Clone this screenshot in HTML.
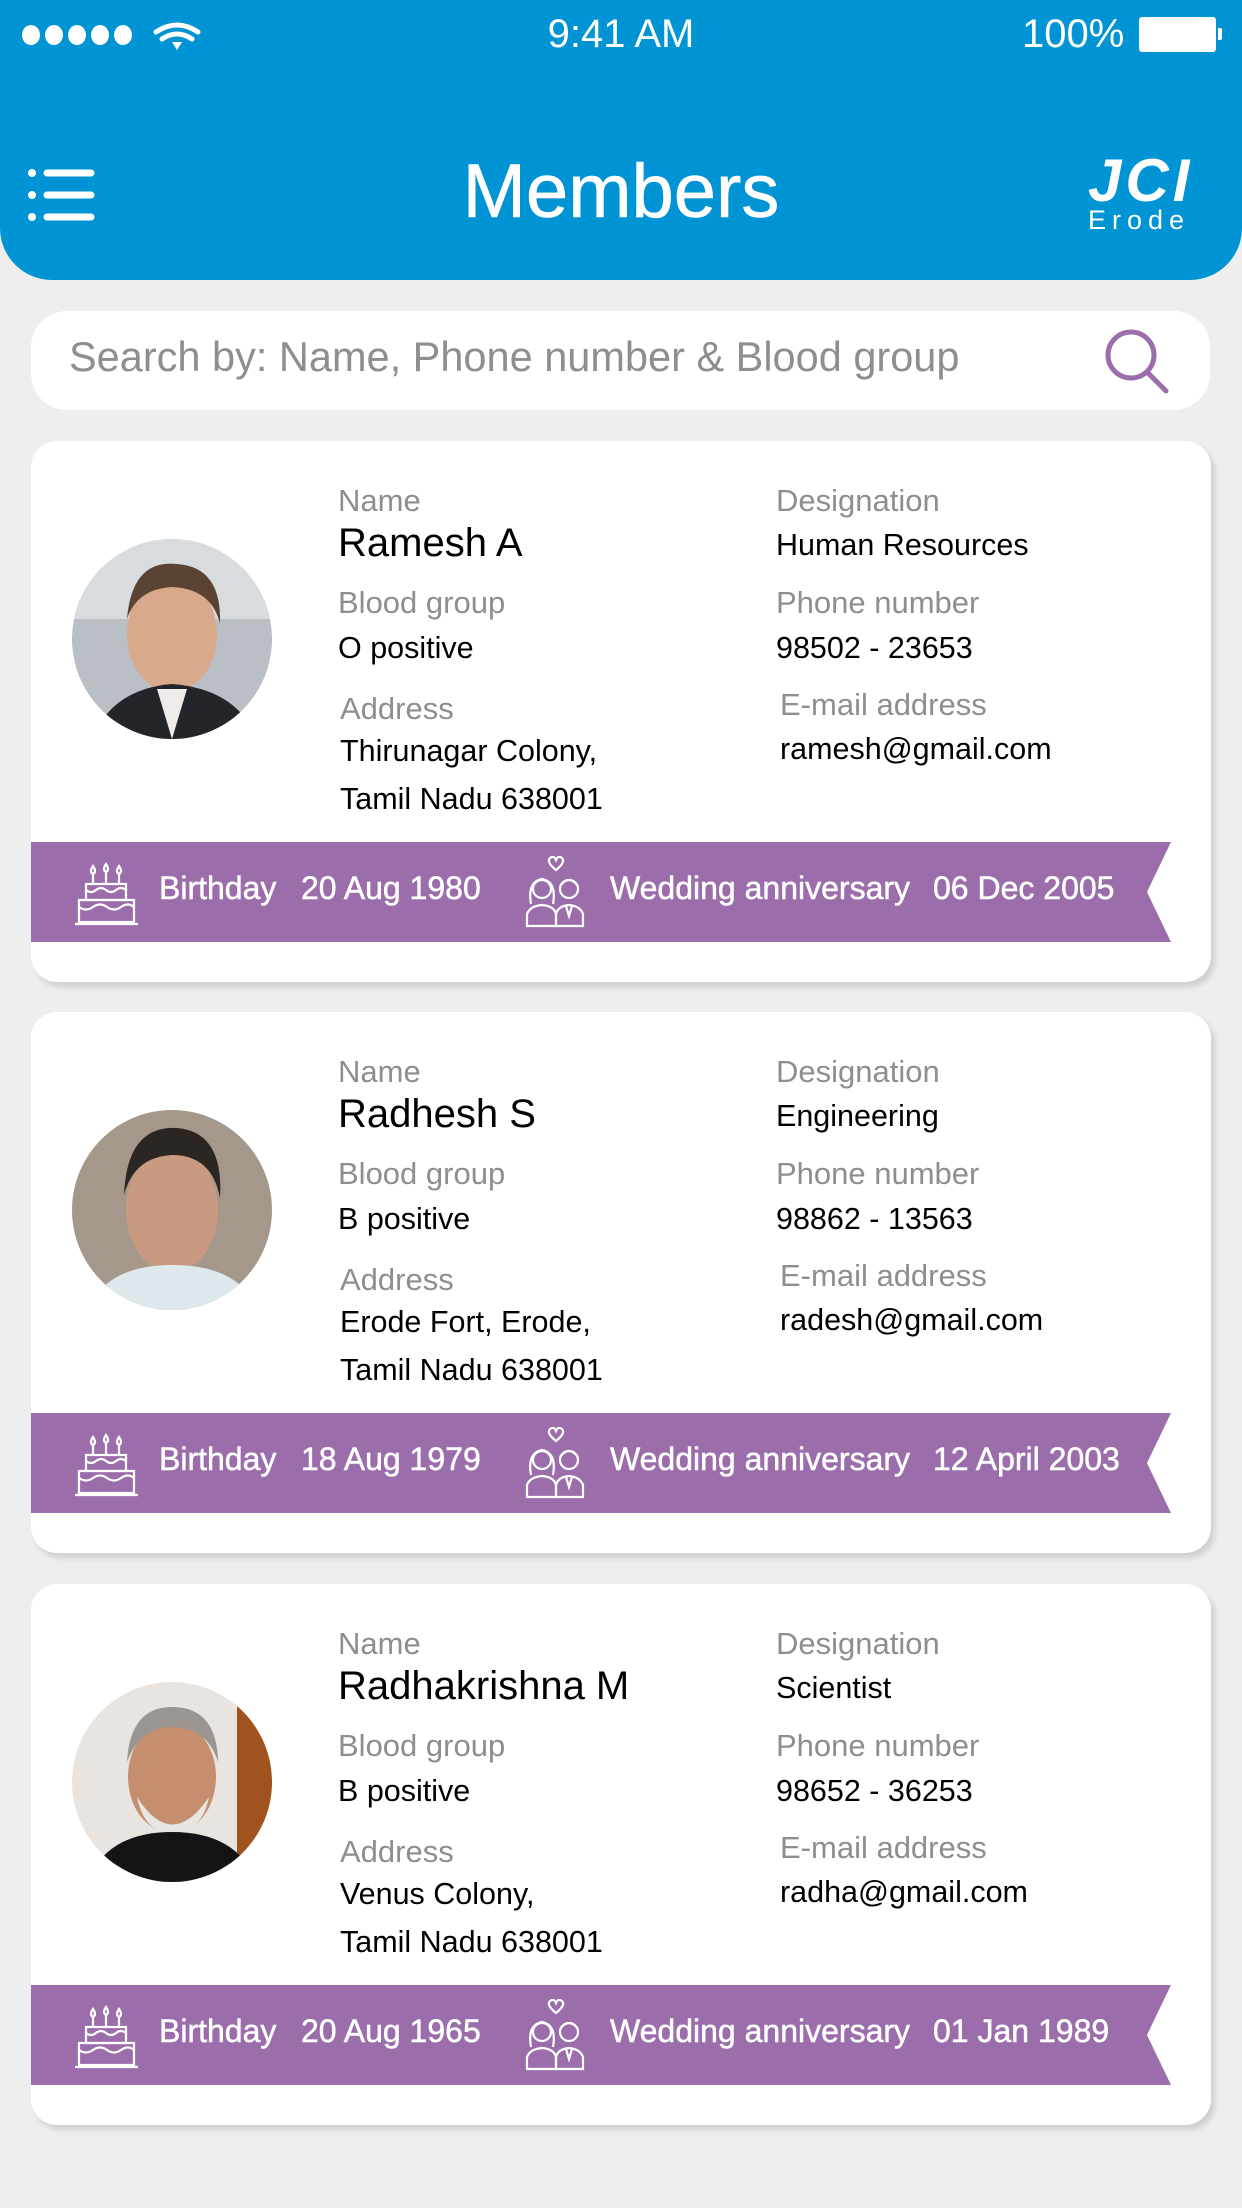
<!DOCTYPE html>
<html><head><meta charset="utf-8"><style>
*{margin:0;padding:0;box-sizing:border-box}
body{width:1242px;height:2208px;background:#eeeeee;font-family:"Liberation Sans",sans-serif;position:relative;overflow:hidden}
.abs{position:absolute;white-space:nowrap;line-height:1}
.hdr{position:absolute;left:0;top:0;width:1242px;height:280px;background:#0094d4;border-radius:0 0 52px 52px}
.search{position:absolute;left:31px;top:311px;width:1179px;height:99px;background:#fff;border-radius:36px}
.card{position:absolute;left:31px;width:1180px;height:541px;background:#fff;border-radius:26px;box-shadow:4px 5px 6px rgba(0,0,0,0.13)}
.lbl{position:absolute;white-space:nowrap;line-height:1;font-size:31px;color:#8e8e8e}
.val{position:absolute;white-space:nowrap;line-height:1;font-size:30.5px;color:#000}
.nm{position:absolute;white-space:nowrap;line-height:1;font-size:40px;color:#000}
.rib{position:absolute;left:0;top:401px;width:1140px;height:100px}
.rt{position:absolute;white-space:nowrap;line-height:1;font-size:32px;color:#fff;top:30px;-webkit-text-stroke:0.5px #fff}
.av{position:absolute;left:41px;top:98px;width:200px;height:200px;border-radius:50%;overflow:hidden}
</style></head><body>
<div class="hdr"></div>
<svg class="abs" style="left:20px;top:22px" width="190" height="32" viewBox="0 0 190 32">
<g fill="#fff"><ellipse cx="11" cy="13" rx="9" ry="10"/><ellipse cx="34" cy="13" rx="9" ry="10"/><ellipse cx="57" cy="13" rx="9" ry="10"/><ellipse cx="80" cy="13" rx="9" ry="10"/><ellipse cx="103" cy="13" rx="9" ry="10"/></g>
<g fill="none" stroke="#fff" stroke-width="5" stroke-linecap="round"><path d="M156 8 Q177 -6 198 8" transform="translate(-20,2)"/><path d="M162 15 Q177 5 192 15" transform="translate(-20,2)"/></g>
<path d="M152 20 L162 20 L157 28Z" fill="#fff"/>
</svg>
<div class="abs" style="left:0;width:1242px;text-align:center;top:14px;font-size:40px;color:#fff">9:41 AM</div>
<div class="abs" style="left:1022px;top:14px;font-size:40px;color:#fff">100%</div>
<div class="abs" style="left:1139px;top:17px;width:77px;height:35px;background:#fff;border-radius:3px"></div>
<div class="abs" style="left:1218px;top:28px;width:4px;height:12px;background:#fff;border-radius:0 2px 2px 0"></div>
<svg class="abs" style="left:28px;top:168px" width="70" height="54" viewBox="0 0 70 54">
<g fill="#fff"><circle cx="4" cy="5" r="4"/><circle cx="4" cy="27" r="4"/><circle cx="4" cy="49" r="4"/></g>
<g stroke="#fff" stroke-width="7" stroke-linecap="round"><line x1="19" y1="5" x2="63" y2="5"/><line x1="19" y1="27" x2="63" y2="27"/><line x1="19" y1="49" x2="63" y2="49"/></g>
</svg>
<div class="abs" style="left:0;width:1242px;text-align:center;top:154px;font-size:76px;color:#fff;-webkit-text-stroke:0.6px #fff">Members</div>
<div class="abs" style="left:1088px;top:151px;font-size:60px;font-weight:bold;font-style:italic;color:#fff;letter-spacing:4px">JCI</div>
<div class="abs" style="left:1088px;top:207px;font-size:27px;color:#fff;letter-spacing:6px">Erode</div>
<div class="search"></div>
<div class="abs" style="left:69px;top:336px;font-size:41.5px;color:#8e8e8e">Search by: Name, Phone number &amp; Blood group</div>
<svg class="abs" style="left:1100px;top:325px" width="72" height="70" viewBox="0 0 72 70">
<circle cx="31" cy="30" r="23" fill="none" stroke="#9b6dab" stroke-width="5"/>
<line x1="47" y1="47" x2="66" y2="66" stroke="#9b6dab" stroke-width="5" stroke-linecap="round"/>
</svg>

<div class="card" style="top:441px">
 <div class="av"><svg width="200" height="200"><rect width="200" height="200" fill="#b9bfc4"/><rect y="0" width="200" height="80" fill="#d8dcdf"/><ellipse cx="100" cy="95" rx="45" ry="58" fill="#d9a98c"/><path d="M55 80 Q60 20 105 25 Q150 28 148 85 Q140 50 100 48 Q65 50 55 80Z" fill="#5a4333"/><path d="M20 200 Q40 150 100 145 Q165 150 185 200Z" fill="#23252b"/><path d="M85 150 L100 200 L115 150Z" fill="#f1ecec"/></svg></div>
 <div class="lbl" style="left:307px;top:44px">Name</div>
 <div class="nm" style="left:307px;top:82px">Ramesh A</div>
 <div class="lbl" style="left:307px;top:146px">Blood group</div>
 <div class="val" style="left:307px;top:192px">O positive</div>
 <div class="lbl" style="left:309px;top:252px">Address</div>
 <div class="val" style="left:309px;top:295px">Thirunagar Colony,</div>
 <div class="val" style="left:309px;top:343px">Tamil Nadu 638001</div>
 <div class="lbl" style="left:745px;top:44px">Designation</div>
 <div class="val" style="left:745px;top:89px">Human Resources</div>
 <div class="lbl" style="left:745px;top:146px">Phone number</div>
 <div class="val" style="left:745px;top:192px">98502 - 23653</div>
 <div class="lbl" style="left:749px;top:248px">E-mail address</div>
 <div class="val" style="left:749px;top:293px">ramesh@gmail.com</div>
 <div class="rib">
  <svg class="abs" style="left:0;top:0" width="1140" height="100"><polygon points="0,0 1140,0 1116,50 1140,100 0,100" fill="#9b6dab"/></svg>
  <svg class="abs" style="left:44px;top:16px" width="66" height="68" viewBox="0 0 66 68" fill="none" stroke="#fff" stroke-width="2.2"><path d="M18 8 q-4 6 0 8 q4 -2 0 -8Z M31 6 q-4 6 0 8 q4 -2 0 -8Z M44 8 q-4 6 0 8 q4 -2 0 -8Z"/><path d="M18 16v10M31 14v12M44 16v10"/><rect x="11" y="26" width="40" height="16"/><rect x="4" y="42" width="55" height="22"/><path d="M11 32q5 4 10 0t10 0t10 0t10 0M4 49q7 5 14 0t14 0t14 0t13 0"/><line x1="0" y1="66" x2="63" y2="66"/></svg>
  <div class="rt" style="left:128px">Birthday</div>
  <div class="rt" style="left:270px">20 Aug 1980</div>
  <svg class="abs" style="left:492px;top:14px" width="66" height="72" viewBox="0 0 66 72" fill="none" stroke="#fff" stroke-width="2.2"><path d="M33 14 q-10 -8 -6 -12 q4 -3 6 2 q2 -5 6 -2 q4 4 -6 12Z"/><circle cx="19" cy="33" r="9"/><path d="M8 48 q-4 -22 11 -25 q15 3 11 25"/><circle cx="46" cy="33" r="9"/><path d="M37 30 q9 -12 18 0"/><path d="M4 70 v-12 q3 -8 15 -9 q12 1 14 9 v12Z"/><path d="M33 70 v-12 q2 -8 13 -9 q11 1 14 9 v12Z"/><path d="M43 50 l3 10 l3 -10"/></svg>
  <div class="rt" style="left:579px">Wedding anniversary</div>
  <div class="rt" style="left:902px">06 Dec 2005</div>
 </div>
</div>

<div class="card" style="top:1012px">
 <div class="av"><svg width="200" height="200"><rect width="200" height="200" fill="#a5978a"/><ellipse cx="100" cy="100" rx="46" ry="62" fill="#c99a82"/><path d="M52 85 Q55 15 105 18 Q152 22 148 88 Q140 45 100 45 Q62 47 52 85Z" fill="#2c2622"/><path d="M15 200 Q35 155 100 155 Q168 155 185 200Z" fill="#dfe8ec"/></svg></div>
 <div class="lbl" style="left:307px;top:44px">Name</div>
 <div class="nm" style="left:307px;top:82px">Radhesh S</div>
 <div class="lbl" style="left:307px;top:146px">Blood group</div>
 <div class="val" style="left:307px;top:192px">B positive</div>
 <div class="lbl" style="left:309px;top:252px">Address</div>
 <div class="val" style="left:309px;top:295px">Erode Fort, Erode,</div>
 <div class="val" style="left:309px;top:343px">Tamil Nadu 638001</div>
 <div class="lbl" style="left:745px;top:44px">Designation</div>
 <div class="val" style="left:745px;top:89px">Engineering</div>
 <div class="lbl" style="left:745px;top:146px">Phone number</div>
 <div class="val" style="left:745px;top:192px">98862 - 13563</div>
 <div class="lbl" style="left:749px;top:248px">E-mail address</div>
 <div class="val" style="left:749px;top:293px">radesh@gmail.com</div>
 <div class="rib">
  <svg class="abs" style="left:0;top:0" width="1140" height="100"><polygon points="0,0 1140,0 1116,50 1140,100 0,100" fill="#9b6dab"/></svg>
  <svg class="abs" style="left:44px;top:16px" width="66" height="68" viewBox="0 0 66 68" fill="none" stroke="#fff" stroke-width="2.2"><path d="M18 8 q-4 6 0 8 q4 -2 0 -8Z M31 6 q-4 6 0 8 q4 -2 0 -8Z M44 8 q-4 6 0 8 q4 -2 0 -8Z"/><path d="M18 16v10M31 14v12M44 16v10"/><rect x="11" y="26" width="40" height="16"/><rect x="4" y="42" width="55" height="22"/><path d="M11 32q5 4 10 0t10 0t10 0t10 0M4 49q7 5 14 0t14 0t14 0t13 0"/><line x1="0" y1="66" x2="63" y2="66"/></svg>
  <div class="rt" style="left:128px">Birthday</div>
  <div class="rt" style="left:270px">18 Aug 1979</div>
  <svg class="abs" style="left:492px;top:14px" width="66" height="72" viewBox="0 0 66 72" fill="none" stroke="#fff" stroke-width="2.2"><path d="M33 14 q-10 -8 -6 -12 q4 -3 6 2 q2 -5 6 -2 q4 4 -6 12Z"/><circle cx="19" cy="33" r="9"/><path d="M8 48 q-4 -22 11 -25 q15 3 11 25"/><circle cx="46" cy="33" r="9"/><path d="M37 30 q9 -12 18 0"/><path d="M4 70 v-12 q3 -8 15 -9 q12 1 14 9 v12Z"/><path d="M33 70 v-12 q2 -8 13 -9 q11 1 14 9 v12Z"/><path d="M43 50 l3 10 l3 -10"/></svg>
  <div class="rt" style="left:579px">Wedding anniversary</div>
  <div class="rt" style="left:902px">12 April 2003</div>
 </div>
</div>

<div class="card" style="top:1584px">
 <div class="av"><svg width="200" height="200"><rect width="200" height="200" fill="#e9e4df"/><rect x="165" width="35" height="200" fill="#a0521f"/><ellipse cx="100" cy="95" rx="44" ry="56" fill="#c58e6f"/><path d="M55 80 Q58 25 100 25 Q145 25 146 80 Q135 45 100 45 Q68 45 55 80Z" fill="#9a9590"/><path d="M65 115 Q100 170 137 115 Q130 150 100 152 Q72 150 65 115Z" fill="#e8e6e2"/><path d="M15 200 Q35 150 100 150 Q165 150 185 200Z" fill="#141417"/></svg></div>
 <div class="lbl" style="left:307px;top:44px">Name</div>
 <div class="nm" style="left:307px;top:82px">Radhakrishna M</div>
 <div class="lbl" style="left:307px;top:146px">Blood group</div>
 <div class="val" style="left:307px;top:192px">B positive</div>
 <div class="lbl" style="left:309px;top:252px">Address</div>
 <div class="val" style="left:309px;top:295px">Venus Colony,</div>
 <div class="val" style="left:309px;top:343px">Tamil Nadu 638001</div>
 <div class="lbl" style="left:745px;top:44px">Designation</div>
 <div class="val" style="left:745px;top:89px">Scientist</div>
 <div class="lbl" style="left:745px;top:146px">Phone number</div>
 <div class="val" style="left:745px;top:192px">98652 - 36253</div>
 <div class="lbl" style="left:749px;top:248px">E-mail address</div>
 <div class="val" style="left:749px;top:293px">radha@gmail.com</div>
 <div class="rib">
  <svg class="abs" style="left:0;top:0" width="1140" height="100"><polygon points="0,0 1140,0 1116,50 1140,100 0,100" fill="#9b6dab"/></svg>
  <svg class="abs" style="left:44px;top:16px" width="66" height="68" viewBox="0 0 66 68" fill="none" stroke="#fff" stroke-width="2.2"><path d="M18 8 q-4 6 0 8 q4 -2 0 -8Z M31 6 q-4 6 0 8 q4 -2 0 -8Z M44 8 q-4 6 0 8 q4 -2 0 -8Z"/><path d="M18 16v10M31 14v12M44 16v10"/><rect x="11" y="26" width="40" height="16"/><rect x="4" y="42" width="55" height="22"/><path d="M11 32q5 4 10 0t10 0t10 0t10 0M4 49q7 5 14 0t14 0t14 0t13 0"/><line x1="0" y1="66" x2="63" y2="66"/></svg>
  <div class="rt" style="left:128px">Birthday</div>
  <div class="rt" style="left:270px">20 Aug 1965</div>
  <svg class="abs" style="left:492px;top:14px" width="66" height="72" viewBox="0 0 66 72" fill="none" stroke="#fff" stroke-width="2.2"><path d="M33 14 q-10 -8 -6 -12 q4 -3 6 2 q2 -5 6 -2 q4 4 -6 12Z"/><circle cx="19" cy="33" r="9"/><path d="M8 48 q-4 -22 11 -25 q15 3 11 25"/><circle cx="46" cy="33" r="9"/><path d="M37 30 q9 -12 18 0"/><path d="M4 70 v-12 q3 -8 15 -9 q12 1 14 9 v12Z"/><path d="M33 70 v-12 q2 -8 13 -9 q11 1 14 9 v12Z"/><path d="M43 50 l3 10 l3 -10"/></svg>
  <div class="rt" style="left:579px">Wedding anniversary</div>
  <div class="rt" style="left:902px">01 Jan 1989</div>
 </div>
</div>
</body></html>
